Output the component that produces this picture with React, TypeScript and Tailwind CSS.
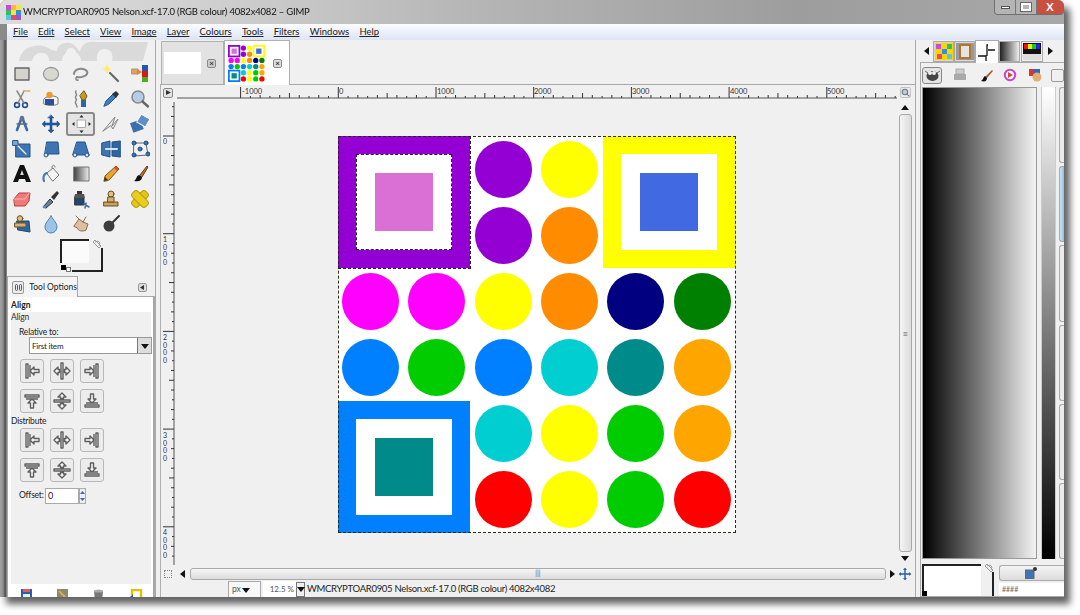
import React from "react";

const BLUE = "#0080ff", GREEN = "#00cc00", MAG = "#ff00ff", YEL = "#ffff00", ORA = "#ff8c00", ORB = "#ffa500", PUR = "#9400d3", RED = "#ff0000", CY = "#00ced1", TEAL = "#008b8b", NAVY = "#000080", DG = "#008000";

function Ic({ children, s = 20 }: { children: React.ReactNode; s?: number }) {
  return <svg width={s} height={s} viewBox="0 0 20 20" fill="none" strokeLinecap="round" strokeLinejoin="round">{children}</svg>;
}

const tools: React.ReactNode[] = [
  <><rect x="3" y="4" width="14" height="12" fill="#d4d4cc" stroke="#666" strokeWidth="1.4" /></>,
  <><ellipse cx="10" cy="10" rx="7.5" ry="6.5" fill="#d8d8d0" stroke="#999" strokeWidth="1.3" strokeDasharray="2 1" /></>,
  <><path d="M3 10c0-4 5-6 9-5s5 3 4 5-6 4-10 3" stroke="#888" strokeWidth="2" /><path d="M6 13c-2 1-1 4 1 3" stroke="#888" strokeWidth="1.6" /></>,
  <><path d="M9 9l8 8" stroke="#666" strokeWidth="2.2" /><circle cx="6" cy="5" r="2.6" fill="#ffee66" /><path d="M6 1v8M2 5h8" stroke="#ffe680" /></>,
  <><rect x="12" y="1" width="6" height="6" fill="#2456b0" /><rect x="12" y="7" width="6" height="6" fill="#d91818" /><rect x="12" y="13" width="6" height="5" fill="#4caf1f" /><rect x="2" y="5" width="6" height="5" fill="#e8a050" stroke="#999" /><path d="M7 5l5 3-5 3z" fill="#f08020" /></>,

  <><circle cx="5" cy="16" r="2.4" stroke="#1d4f91" strokeWidth="1.6" /><circle cx="13" cy="16" r="2.4" stroke="#1d4f91" strokeWidth="1.6" /><path d="M6 14L12 2M12 14L5 2" stroke="#888" strokeWidth="1.5" /><path d="M12 2h6" stroke="#d8b070" strokeWidth="1.3" /></>,
  <><path d="M3 15c4 2 10 2 14 0V9c-3-3-11-3-14 1z" fill="#f4f4f4" stroke="#777" /><rect x="4" y="10" width="9" height="6" fill="#2a4f9c" /><circle cx="8.5" cy="6" r="3.2" fill="#ef9a2a" /></>,
  <><path d="M5 2c-2 2 2 3 0 5s2 3 0 5 1 3 1 6" stroke="#888" strokeWidth="1.5" strokeDasharray="3 1" /><path d="M13 2l3 5-2 4h-3L9 7z" fill="#c79a1e" stroke="#6b5310" /><rect x="10" y="11" width="5" height="7" fill="#2f63a8" /></>,
  <><path d="M3 17l2-5 7-7 3 3-7 7z" fill="#3f7fc4" stroke="#24558f" /><path d="M11 5l4-3 3 3-3 4z" fill="#333" /></>,
  <><circle cx="8" cy="8" r="6" fill="#b6cdea" stroke="#8a8a8a" strokeWidth="1.6" /><path d="M12.5 12.5l5.5 5" stroke="#666" strokeWidth="2.4" /></>,

  <><path d="M10 3L5 16M10 3l5 13" stroke="#3c6aa5" strokeWidth="2.6" /><circle cx="10" cy="4.5" r="2.4" fill="#64748b" /><path d="M5 10h10" stroke="#667" strokeWidth="1.4" /></>,
  <><path d="M10 1l3 3h-2v5h5V7l3 3-3 3v-2h-5v5h2l-3 3-3-3h2v-5H4v2l-3-3 3-3v2h5V4H7z" fill="#1f5da8" stroke="#123c70" strokeWidth=".5" /></>,
  <><rect x="6.5" y="6" width="8" height="7.5" fill="#fff" stroke="#aaa" /><path d="M10.5 1l2 2.5h-4zM10.5 19l2-2.5h-4zM1 10l2.5-2v4zM20 10l-2.5-2v4z" fill="#222" /></>,
  <><path d="M2 17L14 3l-3 9 6-7-5 10-2-3z" fill="#e8e8e8" stroke="#888" /></>,
  <><rect x="1" y="7" width="11" height="10" transform="rotate(-20 7 11)" fill="#3d6fae" /><rect x="8" y="2" width="10" height="9" transform="rotate(30 13 7)" fill="#5d8ec8" stroke="#fff" strokeDasharray="2 1" /></>,

  <><rect x="4" y="5" width="14" height="13" fill="#3d74b4" stroke="#255488" /><rect x="1" y="1.5" width="5" height="5" fill="#7fa8d8" stroke="#255488" /><path d="M6 7l8 8" stroke="#fff" strokeWidth="1.2" /></>,
  <><path d="M6 3h11l1 12H4z" fill="#3d74b4" stroke="#255488" /><circle cx="5" cy="16" r="2" fill="#d7e4f4" stroke="#255488" /></>,
  <><path d="M6 3h8l4 13H2z" fill="#3d74b4" stroke="#255488" /><circle cx="4" cy="16" r="2" fill="#d7e4f4" stroke="#255488" /><circle cx="16" cy="16" r="2" fill="#d7e4f4" stroke="#255488" /></>,
  <><path d="M1 4l8-2v16l-8-2z" fill="#3d74b4" stroke="#255488" /><path d="M19 2l-8 1v14l8 1z" fill="#2f65a5" stroke="#255488" /><path d="M5 10h11" stroke="#d7e4f4" strokeWidth="2" /></>,
  <><path d="M4 4l12 0 2 12-14 1z" stroke="#667" strokeWidth="1" /><g fill="#3d74b4" stroke="#1f4c80"><circle cx="4" cy="4" r="2" /><circle cx="16" cy="4" r="2" /><circle cx="18" cy="15" r="2" /><circle cx="4" cy="16" r="2" /><circle cx="10" cy="10" r="2" /></g></>,

  <><path d="M1 18L8 1h4l7 17h-5l-1-3H7l-1 3z" fill="#111" /><path d="M8.2 11h3.6L10 6z" fill="#ddd" /></>,
  <><path d="M6 9l6-5 6 7-6 6z" fill="#f4f4f4" stroke="#777" /><path d="M6 9c-4 1-4 6-3 8" stroke="#4d78b0" strokeWidth="2.2" /><path d="M11 4c-1-3 3-4 3-1" stroke="#777" /></>,
  <><defs><linearGradient id="gb"><stop offset="0" stopColor="#444" /><stop offset="1" stopColor="#eee" /></linearGradient></defs><rect x="3" y="3" width="15" height="14" fill="url(#gb)" stroke="#777" /></>,
  <><path d="M3 17l1-5L15 2l3 3L8 16z" fill="#e9a530" stroke="#7a5410" /><path d="M15 2l3 3-2 2-3-3z" fill="#d84e3a" /><path d="M3 17l1-4 3 3z" fill="#333" /></>,
  <><path d="M10 11l7-9 1 1-6 10z" fill="#b06a2c" stroke="#6e3f14" /><path d="M9 11c-3 1-2 4-5 6 4 1 8 0 8-4z" fill="#111" /></>,

  <><path d="M2 10l5-6h11l-1 8-4 5H3z" fill="#f07a7a" stroke="#b54040" /><path d="M2 10h11l4-6" stroke="#ffb3b3" /></>,
  <><path d="M3 17l6-7 3 3-7 6z" fill="#6a7f9a" stroke="#333" /><path d="M10 8l6-6 2 2-5 7z" fill="#333" /><circle cx="3" cy="18" r="1.4" fill="#4a90e2" /></>,
  <><path d="M4 8h9v8H4z" fill="#24456f" stroke="#333" /><path d="M4 5h9l1 4H3z" fill="#555" /><rect x="6" y="2" width="5" height="3" fill="#333" /><path d="M13 15l5 3M15 14l-1 5" stroke="#3a6ea8" strokeWidth="1.5" /></>,
  <><rect x="3" y="13" width="14" height="4" fill="#c9a060" stroke="#6b5020" /><circle cx="10" cy="5" r="3" fill="#e2be80" stroke="#6b5020" /><rect x="7" y="8" width="6" height="5" fill="#d8b070" stroke="#6b5020" /></>,
  <><rect x="6" y="0.5" width="8" height="19" rx="3" transform="rotate(45 10 10)" fill="#e3c617" stroke="#b39c0c" /><rect x="6" y="0.5" width="8" height="19" rx="3" transform="rotate(-45 10 10)" fill="#e8cc20" stroke="#b39c0c" /></>,

  <><path d="M5 7h12l1 11-12-2z" fill="#2f65a5" stroke="#1d4778" /><rect x="3" y="9" width="11" height="4" fill="#d8b070" stroke="#6b5020" /><circle cx="8" cy="4.5" r="2.8" fill="#e2be80" stroke="#6b5020" /></>,
  <><path d="M10 2c3 5 6 7 6 11a6 6 0 01-12 0c0-4 3-6 6-11z" fill="#9cc3e6" stroke="#4d7fae" /></>,
  <><path d="M3 12l5-7 4 3 5 2-2 6c-3 2-8 1-9-2z" fill="#e0bfa0" stroke="#8a6a4a" /><path d="M8 5l-3-3M12 8l3-5" stroke="#8a6a4a" /></>,
  <><circle cx="8" cy="12" r="5.5" fill="#3d3d3d" /><path d="M12 8l6-6" stroke="#333" strokeWidth="2" /></>,
];

function Thumb({ s }: { s: number }) {
  const c = s / 6;
  const circles: [number, number, string][] = [
    [2, 0, PUR], [3, 0, YEL], [2, 1, PUR], [3, 1, ORA],
    [0, 2, MAG], [1, 2, MAG], [2, 2, YEL], [3, 2, ORA], [4, 2, NAVY], [5, 2, DG],
    [0, 3, BLUE], [1, 3, GREEN], [2, 3, BLUE], [3, 3, CY], [4, 3, TEAL], [5, 3, ORB],
    [2, 4, CY], [3, 4, YEL], [4, 4, GREEN], [5, 4, ORB],
    [2, 5, RED], [3, 5, YEL], [4, 5, GREEN], [5, 5, RED],
  ];
  const sq: [number, number, string, string][] = [[0, 0, PUR, "#da70d6"], [4, 0, YEL, "#4169e1"], [0, 4, BLUE, TEAL]];
  return (
    <svg width={s} height={s} viewBox={`0 0 ${s} ${s}`} className="block shrink-0">
      <rect width={s} height={s} fill="#fff" />
      {sq.map(([a, b, o, i]) => (
        <g key={o}>
          <rect x={a * c} y={b * c} width={c * 2} height={c * 2} fill={o} />
          <rect x={a * c + c * 0.29} y={b * c + c * 0.29} width={c * 1.42} height={c * 1.42} fill="#fff" />
          <rect x={a * c + c * 0.57} y={b * c + c * 0.57} width={c * 0.86} height={c * 0.86} fill={i} />
        </g>
      ))}
      {circles.map(([a, b, f], k) => <circle key={k} cx={a * c + c / 2} cy={b * c + c / 2} r={c * 0.43} fill={f} />)}
    </svg>
  );
}

function Circle({ c }: { c: string }) {
  return <div className="flex items-center justify-center"><div className="w-[57px] h-[57px] rounded-full" style={{ background: c }} /></div>;
}

function Square({ o, i, ants }: { o: string; i: string; ants?: boolean }) {
  return (
    <div className="col-span-2 row-span-2 flex items-center justify-center" style={{ background: o }}>
      <div className={`w-[96px] h-[96px] bg-white flex items-center justify-center ${ants ? "border border-dashed border-[#222]" : ""}`}>
        <div className="w-[58px] h-[58px]" style={{ background: i }} />
      </div>
    </div>
  );
}

function Artwork() {
  return (
    <div className="w-[398px] h-[397px] bg-white grid grid-cols-6 grid-rows-6 relative">
      <Square o={PUR} i="#da70d6" ants />
      <Circle c={PUR} /><Circle c={YEL} />
      <Square o={YEL} i="#4169e1" />
      <Circle c={PUR} /><Circle c={ORA} />
      {[MAG, MAG, YEL, ORA, NAVY, DG, BLUE, GREEN, BLUE, CY, TEAL, ORB].map((c, k) => <Circle key={k} c={c} />)}
      <Square o={BLUE} i={TEAL} />
      {[CY, YEL, GREEN, ORB, RED, YEL, GREEN, RED].map((c, k) => <Circle key={k} c={c} />)}
      <div className="absolute inset-0 border border-dashed border-[#2a2a10] pointer-events-none" />
      <div className="absolute left-0 top-0 w-[133px] h-[133px] border border-dashed border-[#222] pointer-events-none" />
    </div>
  );
}

function HRuler() {
  const x0 = 175;
  const ticks: React.ReactNode[] = [];
  for (let i = -10; i < 60; i++) {
    const x = 338.3 + i * 9.77 - x0;
    if (x < 2 || x > 722) continue;
    const m = ((i % 10) + 10) % 10;
    const h = m === 0 ? 11 : m === 5 ? 5 : m % 2 === 0 ? 3 : 2;
    ticks.push(<line key={i} x1={x} x2={x} y1={13} y2={13 - h} stroke="#333" strokeWidth="1" />);
  }
  const labels: [string, number][] = [["-1000", 241], ["0", 338], ["1000", 436], ["2000", 533], ["3000", 631], ["4000", 729], ["5000", 826]];
  return (
    <svg width="723" height="14" className="block shrink-0">
      <line x1="2" x2="722" y1="13" y2="13" stroke="#555" strokeWidth="1" />
      {ticks}
      {labels.map(([t, x]) => <text key={t} x={x - x0 + 1} y="9" fontSize="7.5" fill="#333" fontFamily="Lato,sans-serif">{t}</text>)}
    </svg>
  );
}

function VRuler() {
  const y0 = 100;
  const ticks: React.ReactNode[] = [];
  for (let i = -3; i < 45; i++) {
    const y = 136 + i * 9.77 - y0;
    if (y < 2 || y > 465) continue;
    const m = ((i % 10) + 10) % 10;
    const w = m === 0 ? 11 : m === 5 ? 5 : m % 2 === 0 ? 3 : 2;
    ticks.push(<line key={i} y1={y} y2={y} x1={11} x2={11 - w} stroke="#333" strokeWidth="1" />);
  }
  const labels: [string, number][] = [["0", 136], ["1000", 234], ["2000", 332], ["3000", 430], ["4000", 527]];
  return (
    <svg width="12" height="465" className="block shrink-0">
      <line x1="11" x2="11" y1="2" y2="465" stroke="#555" strokeWidth="1" />
      {ticks}
      {labels.map(([t, y]) => t.split("").map((d, k) => <text key={t + k} x="0" y={y - y0 + 8 + k * 7.6} fontSize="7" fill="#333" fontFamily="Lato,sans-serif">{d}</text>))}
    </svg>
  );
}

const alignIcons: string[] = [
  "M4 3h2v14H4zM8 4v12M8 10l4-4v2.5h5v3h-5V14z",
  "M9 2h2v16H9zM2 10l4-4v2.5h1.500v3H6V14zM18 10l-4-4v2.5h-1.500v3H14V14z",
  "M14 3h2v14h-2zM12 4v12M12 10L8 6v2.500H3v3h5V14z",
  "M3 4V6h14V4zM4 8h12M10 8l-4 4h2.500v5h3v-5H14z",
  "M2 9v2h16V9zM10 2L6 6h2.500v1.500h3V6H14zM10 18l-4-4h2.500v-1.500h3V14H14z",
  "M3 14v2h14v-2zM4 12h12M10 12L6 8h2.500V3h3v5H14z",
];

function AlignBtn({ d }: { d: string }) {
  return (
    <div className="w-[24px] h-[24px] rounded-[3px] border border-[#b8b8b8] bg-[#ececec] flex items-center justify-center">
      <svg width="20" height="20" viewBox="0 0 20 20" fill="#f6f6f6" stroke="#5f5f5f" strokeWidth="1.4" strokeLinejoin="round"><path d={d} /></svg>
    </div>
  );
}

function AlignRow({ items }: { items: string[] }) {
  return <div className="flex gap-[6px]">{items.map((d) => <AlignBtn key={d} d={d} />)}</div>;
}

function Tri({ dir, c = "#111" }: { dir: "d" | "l" | "r" | "u"; c?: string }) {
  const p = { d: "M1 3h8L5 8z", l: "M7 1v8L2 5z", r: "M3 1v8l5-4z", u: "M1 7h8L5 2z" }[dir];
  return <svg width="10" height="10" viewBox="0 0 10 10" className="block shrink-0"><path d={p} fill={c} /></svg>;
}

function Swap() {
  return <svg width="10" height="10" viewBox="0 0 10 10"><path d="M1 3l2-2 6 6-2 2zM3 3l3-1 2 2-1 3" stroke="#999" fill="#eee" strokeWidth="1" /></svg>;
}

function FgBg() {
  return (
    <div className="w-[43px] h-[33px] relative shrink-0">
      <div className="w-[29px] h-[24px] bg-[#fbfbfb] border-t-2 border-l-2 border-[#222]" />
      <div className="absolute right-0 bottom-0 w-[31px] h-[24px] border-r-2 border-b-2 border-[#222]" />
      <div className="absolute left-[1px] bottom-[2px] w-[5px] h-[5px] bg-black" />
      <div className="absolute left-[6px] bottom-0 w-[5px] h-[5px] border border-[#777] bg-white" />
      <div className="absolute right-[1px] top-0"><Swap /></div>
    </div>
  );
}

const menu = ["File", "Edit", "Select", "View", "Image", "Layer", "Colours", "Tools", "Filters", "Windows", "Help"];
const dockBtns = ["bg-[#ececec]", "bg-[linear-gradient(90deg,#cfe4f4,#8fc0e4)] border-[#4f8fc0]", "bg-[#ececec]", "bg-[#ececec]", "bg-[#ececec]", "bg-[#ececec]"];

export default function App() {
  return (
    <div className="w-[1080px] h-[615px] bg-white overflow-hidden text-[#222]" style={{ fontFamily: "Lato,'Noto Sans',sans-serif" }}>
      <div className="w-[1064px] h-[597px] flex flex-col overflow-hidden rounded-tl-[6px] rounded-tr-[6px] shadow-[6px_7px_7px_rgba(0,0,0,0.62)] bg-[#8a8a8a] blur-[0.35px]">
        {/* title bar */}
        <div className="h-[24px] shrink-0 flex items-center pl-[6px] bg-[linear-gradient(90deg,#dcdcdc_0%,#cfcfcf_20%,#b5b5b5_45%,#9d9d9d_75%,#a8a8a8_100%)]">
          <svg width="15" height="15" viewBox="0 0 15 15" className="shrink-0">
            <rect width="15" height="15" fill="#f5e642" />
            <rect x="0" y="0" width="5" height="5" fill="#c44cd8" /><rect x="5" y="0" width="5" height="5" fill="#ffb347" /><rect x="10" y="5" width="5" height="5" fill="#2f8fe8" /><rect x="0" y="5" width="5" height="5" fill="#30c060" /><rect x="5" y="10" width="5" height="5" fill="#e84b6a" /><rect x="0" y="10" width="5" height="5" fill="#54c6e8" /><rect x="10" y="10" width="5" height="5" fill="#9b59b6" />
          </svg>
          <span className="ml-[2px] text-[9.5px] leading-none text-[#111] tracking-[-0.2px] whitespace-nowrap">WMCRYPTOAR0905 Nelson.xcf-17.0 (RGB colour) 4082x4082 – GIMP</span>
          <div className="ml-auto self-start flex h-[15px] rounded-b-[4px] border border-t-0 border-[#6f6f6f] overflow-hidden">
            <div className="w-[21px] flex items-center justify-center border-r border-[#777] bg-[#b4b4b4]"><div className="w-[9px] h-[3px] bg-white border border-[#555]" /></div>
            <div className="w-[21px] flex items-center justify-center border-r border-[#777] bg-[#b4b4b4]"><div className="w-[10px] h-[8px] border-2 border-white outline outline-1 outline-[#666]" /></div>
            <div className="w-[26px] flex items-center justify-center bg-[#c8503e] text-white text-[11px] font-bold leading-[14px]">X</div>
          </div>
        </div>
        {/* menu */}
        <div className="h-[16px] shrink-0 flex ml-[7px] pl-[6px] gap-[10.2px] items-center bg-[linear-gradient(180deg,#fbfcfe_0%,#dde4f2_100%)] text-[9.5px] leading-none text-[#222]">
          {menu.map((m) => <span key={m} className="underline underline-offset-[1px]" style={{ textDecorationThickness: "0.5px" }}>{m}</span>)}
        </div>
        {/* body */}
        <div className="flex-1 min-h-0 flex bg-[#f0f0f0]">
          <div className="w-[7px] shrink-0 bg-[linear-gradient(90deg,#a4a4a4,#8c8c8c_45%,#4c4c4c_75%,#999)]" />
          {/* toolbox */}
          <div className="w-[149px] shrink-0 flex flex-col border-r border-[#a8a8a8]">
            <div className="h-[21px] shrink-0 px-[6px] overflow-hidden">
              <svg width="136" height="21" viewBox="0 0 136 21"><path d="M6 21C8 8 20 4 30 6c6 1 8 5 14 5 0-6 6-9 13-8 6 1 8 8 10 8 2-7 8-10 15-9h53l-5 19H99c2-8-2-12-8-12-5 0-8 5-7 12H68c0-6-5-10-11-9-5 0-8 4-8 9H36c0-6-4-9-9-8-4 0-7 4-8 8z" fill="#dadada" /><circle cx="58" cy="13" r="5" fill="#f0f0f0" /></svg>
            </div>
            <div className="grid grid-cols-5 h-[175px] shrink-0 auto-rows-[25px]">
              {tools.map((t, k) => (
                <div key={k} className="flex items-center justify-center">
                  <div className={`w-[29px] h-[24px] flex items-center justify-center rounded-[3px] ${k === 12 ? "border-2 border-[#8a8a8a] bg-[#e4e4e4]" : ""}`}><Ic>{t}</Ic></div>
                </div>
              ))}
            </div>
            <div className="h-[39px] shrink-0 pl-[53px] pt-[3px]"><FgBg /></div>
            {/* tool options */}
            <div className="flex items-end justify-between h-[21px] shrink-0">
              <div className="w-[71px] h-[21px] flex items-center gap-[5px] pl-[4px] bg-[#f4f4f4] border border-b-0 border-[#a8a8a8] -mb-[1px] relative z-10 text-[8.5px]">
                <div className="w-[14px] h-[13px] border border-[#999] rounded-[2px] flex items-center justify-center gap-[1px] bg-[#eee]"><span className="w-[3px] h-[7px] border border-[#555] rounded-sm" /><span className="w-[3px] h-[7px] border border-[#555] rounded-sm" /></div>
                <span className="whitespace-nowrap">Tool Options</span>
              </div>
              <div className="w-[9px] h-[9px] mr-[8px] mb-[4px] border border-[#999] rounded-[2px] flex items-center justify-center bg-[#ddd]"><svg width="5" height="5" viewBox="0 0 5 5"><path d="M4 0v5L0 2.5z" fill="#333" /></svg></div>
            </div>
            <div className="flex-1 min-h-0 border border-[#a8a8a8] border-b-0 border-r-2 bg-white pl-[3px] pr-[2px] flex flex-col overflow-hidden">
              <div className="h-[13px] shrink-0 mt-[2px] text-[8.5px] font-bold leading-[13px]">Align</div>
              <div className="flex-1 bg-[#f0f0f0] flex flex-col text-[8.5px] leading-none tracking-[-0.2px]">
                <div className="h-[11px] pt-[1px] text-[#333]">Align</div>
                <div className="pl-[8px] pt-[5px] h-[14px]">Relative to:</div>
                <div className="ml-[18px] h-[17px] w-[123px] flex bg-white border border-[#999] items-center pl-[2px] text-[8px] shrink-0">
                  <span className="flex-1">First item</span>
                  <div className="w-[14px] h-[15px] bg-[#ddd] border-l border-[#777] flex items-center justify-center"><Tri dir="d" /></div>
                </div>
                <div className="pl-[9px] pt-[5px] flex flex-col gap-[6px]">
                  <AlignRow items={alignIcons.slice(0, 3)} />
                  <AlignRow items={alignIcons.slice(3)} />
                </div>
                <div className="pt-[4px] h-[15px]">Distribute</div>
                <div className="pl-[9px] flex flex-col gap-[6px]">
                  <AlignRow items={alignIcons.slice(0, 3)} />
                  <AlignRow items={alignIcons.slice(3)} />
                </div>
                <div className="pl-[8px] mt-[5px] flex items-center h-[17px]">
                  <span className="w-[26px]">Offset:</span>
                  <div className="w-[34px] h-[16px] bg-white border border-[#aaa] flex items-center pl-[2px] text-[9px]">0</div>
                  <div className="w-[7px] h-[16px] border border-[#aaa] bg-[#eee] flex flex-col items-center justify-around"><svg width="5" height="3"><path d="M0 3l2.500-3L5 3z" fill="#3a6ea8" /></svg><svg width="5" height="3"><path d="M0 0l2.500 3L5 0z" fill="#3a6ea8" /></svg></div>
                </div>
              </div>
              <div className="h-[13px] shrink-0 pt-[5px] flex items-start pl-[10px] gap-[20px] overflow-hidden bg-white">
                <svg width="16" height="16" className="shrink-0"><rect x="0" y="0" width="11" height="12" fill="#2a5fa8" /><rect x="2" y="0" width="7" height="3" fill="#e85a5a" /><rect x="2" y="5" width="7" height="7" fill="#e8eef6" /></svg>
                <svg width="16" height="16" className="shrink-0"><rect x="0" y="0" width="11" height="12" fill="#8a8a70" /><path d="M2 2l7 7" stroke="#d8b050" strokeWidth="2" /></svg>
                <svg width="16" height="16" className="shrink-0"><path d="M1 2h9l-1 10H2z" fill="#777" /><ellipse cx="5.500" cy="2" rx="4.500" ry="1.600" fill="#aaa" /></svg>
                <svg width="16" height="16" className="shrink-0"><path d="M3 6V1h9v10H5" stroke="#e2c200" strokeWidth="2.400" fill="none" /><path d="M0 9l4-4v8z" fill="#2a5fa8" /></svg>
              </div>
            </div>
          </div>
          <div className="w-[4px] shrink-0 bg-[#f0f0f0]" />
          {/* center */}
          <div className="w-[755px] shrink-0 flex flex-col min-h-0 relative">
            <div className="h-[45px] shrink-0 flex items-end pl-[1px] border-b border-[#a8a8a8]">
              <div className="w-[63px] h-[43px] bg-[#e2e2e2] border border-b-0 border-[#b0b0b0] flex items-center pl-[2px] gap-[6px]">
                <div className="w-[37px] h-[22px] bg-white shrink-0" />
                <div className="w-[9px] h-[9px] rounded-[2px] border border-[#888] bg-[#ccc] flex items-center justify-center text-[8px] leading-none font-bold text-[#333]">×</div>
              </div>
              <div className="w-[66px] h-[45px] bg-white border border-b-0 border-[#b0b0b0] -mb-[1px] flex items-center pl-[3px] gap-[8px]">
                <Thumb s={37} />
                <div className="w-[9px] h-[9px] rounded-[2px] border border-[#888] bg-[#ddd] flex items-center justify-center text-[8px] leading-none font-bold text-[#333]">×</div>
              </div>
            </div>
            <div className="flex-1 min-h-0 flex flex-col border-l border-[#b0b0b0]">
              <div className="h-[15px] shrink-0 flex bg-[#f0f0f0]">
                <div className="w-[14px] shrink-0 flex items-center justify-center">
                  <div className="w-[10px] h-[10px] border border-[#888] rounded-[2px] bg-[#e4e4e4] flex items-center justify-center"><svg width="5" height="5"><path d="M0 0l5 2.500L0 5z" fill="#333" /></svg></div>
                </div>
                <HRuler />
                <div className="w-[14px] flex items-center justify-center"><svg width="11" height="11" viewBox="0 0 20 20"><rect x="1" y="1" width="18" height="18" rx="2" fill="#eee" stroke="#999" /><circle cx="9" cy="9" r="5" fill="#b6cdea" stroke="#777" strokeWidth="2" /><path d="M12 12l5 5" stroke="#777" strokeWidth="2" /></svg></div>
              </div>
              <div className="flex-1 min-h-0 flex">
                <div className="w-[14px] shrink-0 pl-[2px]"><VRuler /></div>
                <div className="w-[723px] shrink-0 bg-[#f0f0f0] flex justify-center pt-[36px]"><Artwork /></div>
                <div className="w-[14px] flex flex-col items-center py-[3px]">
                  <Tri dir="u" />
                  <div className="flex-1 w-[13px] my-[1px] rounded-[3px] border border-[#a9a9a9] bg-[linear-gradient(90deg,#f4f4f4,#dcdcdc)] flex items-center justify-center text-[9px] leading-none text-[#555]">≡</div>
                  <Tri dir="d" />
                </div>
              </div>
              <div className="h-[15px] shrink-0 flex items-center">
                <div className="w-[14px] shrink-0 flex justify-center"><div className="w-[8px] h-[8px] border border-dotted border-[#888]" /></div>
                <div className="w-[15px] flex justify-center"><Tri dir="l" /></div>
                <div className="w-[696px] h-[12px] rounded-[3px] border border-[#a9a9a9] bg-[linear-gradient(180deg,#f6f6f6,#dcdcdc)] flex items-center justify-center text-[7px] leading-none text-[#555]">|||</div>
                <div className="w-[12px] flex justify-center"><Tri dir="r" /></div>
                <svg width="14" height="14" viewBox="0 0 20 20" className="shrink-0"><path d="M10 1l3 3h-2v5h5V7l3 3-3 3v-2h-5v5h2l-3 3-3-3h2v-5H4v2l-3-3 3-3v2h5V4H7z" fill="#1f5da8" /></svg>
              </div>
              <div className="h-[16px] shrink-0 flex items-center pl-[67px] text-[9.5px] leading-none bg-[#f0f0f0] overflow-hidden">
                <div className="w-[33px] h-[16px] bg-[#f8f8f8] border border-b-0 border-[#aaa] flex items-center pl-[3px] text-[8.5px] text-[#555]">px<Tri dir="d" /></div>
                <div className="w-[33px] h-[16px] ml-[2px] bg-white flex items-center justify-end pr-[2px] text-[8px] text-[#555]">12.5 %</div>
                <div className="w-[9px] h-[15px] border border-[#777] bg-[#eee] flex items-center justify-center"><Tri dir="d" /></div>
                <span className="ml-[2px] tracking-[-0.3px] whitespace-nowrap text-[#222]">WMCRYPTOAR0905 Nelson.xcf-17.0 (RGB colour) 4082x4082</span>
              </div>
            </div>
          </div>
          {/* right dock */}
          <div className="flex-1 min-w-0 flex flex-col border-l border-[#a8a8a8] pl-[4px] overflow-hidden">
            <div className="h-[22px] shrink-0 flex items-end">
              <div className="w-[13px] flex justify-center self-center"><Tri dir="l" /></div>
              {[
                <svg key="a" width="18" height="17"><rect width="18" height="17" fill="#ffd400" /><rect x="1" y="1" width="5" height="5" fill="#c94cd8" /><rect x="7" y="6" width="5" height="5" fill="#2f8fe8" /><rect x="12" y="1" width="5" height="5" fill="#30c060" /><rect x="2" y="11" width="5" height="5" fill="#e84b6a" /><rect x="12" y="11" width="5" height="5" fill="#54c6e8" /></svg>,
                <svg key="b" width="18" height="17"><rect width="18" height="17" fill="#999" /><rect x="3" y="1" width="12" height="15" fill="#b5762a" /><rect x="5" y="3" width="8" height="11" fill="#e4e4e4" /></svg>,
              ].map((n, k) => <div key={k} className="w-[21px] h-[21px] bg-[#d8d8d8] border border-[#aaa] flex items-center justify-center">{n}</div>)}
              <div className="w-[24px] h-[23px] bg-white border border-b-0 border-[#aaa] -mb-[1px] z-10 flex items-center justify-center">
                <svg width="18" height="20"><path d="M0 14h8v5M9 14V3h1M10 8h7" stroke="#111" strokeWidth="1.300" fill="none" /></svg>
              </div>
              <div className="w-[21px] h-[21px] border border-[#aaa] bg-[linear-gradient(90deg,#222,#eee)]" />
              <div className="w-[22px] h-[21px] border border-[#aaa] flex items-center justify-center ml-[1px]">
                <svg width="18" height="17"><rect width="18" height="17" fill="#111" /><rect x="1" y="1" width="4" height="5" fill="#e11" /><rect x="5" y="1" width="4" height="5" fill="#ee0" /><rect x="9" y="1" width="4" height="5" fill="#1c1" /><rect x="13" y="1" width="4" height="5" fill="#22e" /><rect x="0" y="11" width="18" height="6" fill="#ddd" /></svg>
              </div>
              <div className="w-[13px] flex justify-center self-center"><Tri dir="r" /></div>
            </div>
            <div className="flex-1 min-h-0 border border-[#aaa] border-r-0 bg-white flex flex-col">
              <div className="h-[24px] shrink-0 flex items-center bg-[#f0f0f0] pl-[1px]">
                <div className="w-[23px] h-[17px] rounded-[3px] border border-[#888] bg-[#e4e4e4] flex items-center justify-center"><svg width="15" height="12" viewBox="0 0 15 12"><ellipse cx="7.500" cy="7" rx="6" ry="5" fill="#444" /><circle cx="5" cy="4" r="2" fill="#eee" /><circle cx="9" cy="4" r="2" fill="#eee" /><path d="M0 2l3 2M15 2l-3 2" stroke="#666" /></svg></div>
                <div className="ml-[11px] w-[14px]"><svg width="14" height="14"><rect x="3" y="1" width="8" height="5" fill="#ccc" stroke="#aaa" /><rect x="1" y="6" width="12" height="6" fill="#aaa" /></svg></div>
                <div className="ml-[13px] w-[14px]"><svg width="14" height="14"><path d="M5 9L12 2l1 1-6 7z" fill="#a06028" /><path d="M5 8c-2 1-1 3-4 5 4 1 6 0 6-3z" fill="#111" /></svg></div>
                <div className="ml-[9px] w-[14px]"><svg width="14" height="14"><circle cx="7" cy="7" r="5.200" fill="#fff" stroke="#c4c" strokeWidth="2" /><path d="M5 4l5 3-5 3z" fill="#d44" /></svg></div>
                <div className="ml-[11px] w-[14px]"><svg width="14" height="14"><rect x="1" y="1" width="7" height="7" fill="#d33" /><rect x="6" y="1" width="6" height="6" fill="#36b" /><circle cx="9" cy="9" r="4.500" fill="#e0b070" /></svg></div>
                <div className="ml-[9px] w-[14px] h-[13px] border border-[#999] rounded-[2px]" />
              </div>
              <div className="h-[472px] shrink-0 flex bg-[#f0f0f0] pl-[1px]">
                <div className="w-[115px] shrink-0 border border-[#999] bg-[linear-gradient(90deg,#000_0%,#fff_105%)]" />
                <div className="w-[4px] shrink-0" />
                <div className="w-[15px] shrink-0 bg-[linear-gradient(180deg,#fff_0%,#000_100%)] border-x border-[#ccc]" />
                <div className="w-[3px] shrink-0" />
                <div className="flex-1 flex flex-col gap-[3px] overflow-hidden">
                  {dockBtns.map((b, k) => <div key={k} className={`flex-1 rounded-l-[3px] border border-r-0 border-[#aaa] ${b}`} />)}
                </div>
              </div>
              <div className="flex-1 min-h-0 flex bg-[#f0f0f0] overflow-hidden pt-[5px]">
                <div className="relative w-[72px] shrink-0 ml-[1px] h-[40px]">
                  <div className="w-[59px] h-[40px] bg-white border-t-2 border-l-2 border-[#222]" />
                  <div className="absolute right-0 top-[8px] h-[40px] border-r-2 border-[#222]" />
                  <div className="absolute left-0 top-[27px] w-[5px] h-[5px] bg-black" />
                  <div className="absolute right-[0px] -top-[1px]"><Swap /></div>
                </div>
                <div className="flex-1 flex flex-col pl-[5px] pt-[1px]">
                  <div className="h-[17px] rounded-l-[3px] border border-r-0 border-[#aaa] bg-[linear-gradient(180deg,#f4f4f4,#dcdcdc)] flex items-center justify-center pr-[2px]">
                    <svg width="12" height="12"><rect x="0" y="3" width="9" height="9" fill="#3d74b4" stroke="#666" /><circle cx="10" cy="2" r="2" fill="#333" /></svg>
                  </div>
                  <div className="h-[14px] mt-[2px] bg-white text-[7px] text-[#666] pl-[3px] overflow-hidden leading-[12px]">####</div>
                </div>
              </div>
            </div>
          </div>
        </div>
      </div>
    </div>
  );
}
